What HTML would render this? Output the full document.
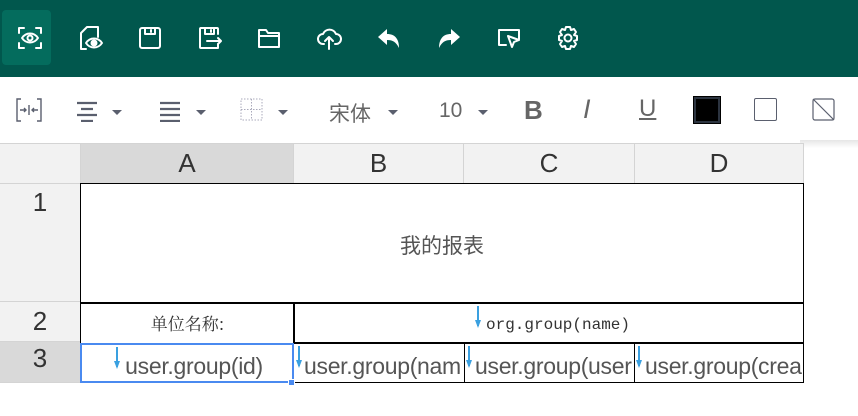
<!DOCTYPE html>
<html><head><meta charset="utf-8"><style>
*{margin:0;padding:0;box-sizing:border-box}
body{width:858px;height:416px;overflow:hidden;background:#fff;font-family:"Liberation Sans","Noto Sans CJK SC",sans-serif;position:relative}
.hdr{position:absolute;left:0;top:0;width:858px;height:77px;background:#01574d}
.act{position:absolute;left:2px;top:10px;width:49px;height:55px;background:#046c5d;border-radius:4px}
.ic{position:absolute;top:24px;width:28px;height:28px}
.ic svg{width:28px;height:28px;fill:none;stroke:#fff;stroke-width:2;stroke-linecap:round;stroke-linejoin:round}
.caret{position:absolute;width:0;height:0;border-left:5px solid transparent;border-right:5px solid transparent;border-top:5px solid #5a5f6e}
.t{position:absolute;font-size:21px;color:#666}
.c{position:absolute;display:flex;align-items:center;justify-content:center;font-size:26px;color:#333}
.ch{background:#f2f2f2;border-right:1px solid #d4d4d4;border-bottom:1px solid #d4d4d4}
.cell{position:absolute;border:1px solid #000;display:flex;align-items:center;justify-content:center;color:#555;overflow:hidden;white-space:nowrap}
.arr{position:absolute;top:2px;width:2px;height:20px;background:#3aa0e0}
.arr:after{content:"";position:absolute;left:-2px;bottom:-2px;border-left:3px solid transparent;border-right:3px solid transparent;border-top:8px solid #3aa0e0}
.u{font-size:23px;letter-spacing:-0.3px;padding-top:6px}
</style></head><body>
<div class="hdr">
<div class="act"></div>
<div class="ic" style="left:16px"><svg viewBox="0 0 28 28"><path d="M3 9V4h5M20 4h5v5M25 19v5h-5M8 24H3v-5"/><path d="M6 14c4-6 12-6 16 0c-4 6-12 6-16 0z"/><circle cx="14" cy="14" r="2.5"/></svg></div>
<div class="ic" style="left:76px"><svg viewBox="0 0 28 28"><path d="M10 25H5V9l6-6h11v10"/><path d="M10 19c4-6 12-6 16 0c-4 6-12 6-16 0z"/><circle cx="18" cy="19" r="2.5" fill="#fff"/></svg></div>
<div class="ic" style="left:136px"><svg viewBox="0 0 28 28"><rect x="4" y="4" width="20" height="20" rx="2"/><path d="M9 4v6h10V4M15 6v2"/></svg></div>
<div class="ic" style="left:196px"><svg viewBox="0 0 28 28"><path d="M22 10V5a1 1 0 0 0-1-1H5a1 1 0 0 0-1 1v18a1 1 0 0 0 1 1h17v-4"/><path d="M9 4v6h9V4M15 6v2M11 17h14M22 14l3 3-3 3"/></svg></div>
<div class="ic" style="left:255px"><svg viewBox="0 0 28 28"><path d="M4 6h7l2 3h11v14H4z M4 12h20"/></svg></div>
<div class="ic" style="left:315px"><svg viewBox="0 0 28 28"><path d="M9 20H8a5 5 0 0 1 0-10 7 7 0 0 1 13 0 5 5 0 0 1 0 10h-1"/><path d="M14 25V13M10 17l4-4 4 4"/></svg></div>
<div class="ic" style="left:375px"><svg viewBox="0 0 28 28" style="fill:#fff;stroke:none"><path d="M12 5L3 13l9 8v-5c6 0 9 2 12 8c0-9-4-14-12-14z"/></svg></div>
<div class="ic" style="left:435px"><svg viewBox="0 0 28 28" style="fill:#fff;stroke:none"><path d="M16 5l9 8-9 8v-5c-6 0-9 2-12 8c0-9 4-14 12-14z"/></svg></div>
<div class="ic" style="left:495px"><svg viewBox="0 0 28 28"><path d="M11 21H4V6h20v9"/><path d="M13 12l11 4-5 2-2 5z"/></svg></div>
<div class="ic" style="left:554px"><svg viewBox="0 0 28 28"><circle cx="14" cy="14" r="3.5"/><path d="M12 3h4l1 3 3-1 2 3-2 3 3 1v4l-3 1 2 3-2 3-3-1-1 3h-4l-1-3-3 1-2-3 2-3-3-1v-4l3-1-2-3 2-3 3 1z"/></svg></div>
</div>
<div style="position:absolute;left:800px;top:140px;width:58px;height:8px;background:linear-gradient(#e6e6e6,#fff)"></div>
<svg style="position:absolute;left:15px;top:97px" width="28" height="26" viewBox="0 0 28 26" fill="none" stroke="#5a5f6e" stroke-width="1.4"><path d="M6 2H2v22h4M22 2h4v22h-4M5 13h6M9 11l2 2-2 2M23 13h-6M19 11l-2 2 2 2M14 8v10"/></svg>
<svg style="position:absolute;left:75px;top:100px" width="24" height="22" viewBox="0 0 24 22" stroke="#5a5f6e" stroke-width="2.2"><path d="M2 3h20M6 9h12M2 15h20M6 21h12"/></svg>
<div class="caret" style="left:112px;top:110px"></div>
<svg style="position:absolute;left:158px;top:100px" width="24" height="22" viewBox="0 0 24 22" stroke="#5a5f6e" stroke-width="2.2"><path d="M2 3h20M2 9h20M2 15h20M2 21h20"/></svg>
<div class="caret" style="left:196px;top:110px"></div>
<svg style="position:absolute;left:240px;top:98px" width="24" height="24" viewBox="0 0 24 24" stroke="#aab" stroke-width="1" stroke-dasharray="1.5 1.5" fill="none"><rect x="1" y="1" width="21" height="21"/><path d="M11.5 1v21M1 11.5h21"/></svg>
<div class="caret" style="left:278px;top:110px"></div>
<div class="t" style="left:329px;top:98px">宋体</div>
<div class="caret" style="left:388px;top:110px"></div>
<div class="t" style="left:439px;top:99px">10</div>
<div class="caret" style="left:478px;top:110px"></div>
<div class="t" style="left:524px;top:95px;font-weight:bold;font-size:26px;color:#666">B</div>
<div class="t" style="left:583px;top:94px;font-style:italic;font-size:27px">I</div>
<div class="t" style="left:639px;top:95px;font-size:24px;text-decoration:underline">U</div>
<div style="position:absolute;left:694px;top:97px;width:26px;height:26px;background:#000;border:2px solid #2c3440;outline:1px solid #000"></div>
<div style="position:absolute;left:754px;top:98px;width:23px;height:23px;border:1.5px solid #5a5f6e;border-radius:2px"></div>
<svg style="position:absolute;left:812px;top:98px" width="23" height="23" viewBox="0 0 23 23" fill="none" stroke="#5a5f6e" stroke-width="1.2"><rect x="1" y="1" width="21" height="21" rx="2"/><path d="M1 1l21 21"/></svg>

<div class="c ch" style="left:0;top:143px;width:81px;height:41px;border-top:1px solid #d4d4d4"></div>
<div class="c ch" style="left:81px;top:143px;width:213px;height:41px;background:#d9d9d9;border-top:1px solid #d4d4d4">A</div>
<div class="c ch" style="left:294px;top:143px;width:170px;height:41px;border-top:1px solid #d4d4d4">B</div>
<div class="c ch" style="left:464px;top:143px;width:171px;height:41px;border-top:1px solid #d4d4d4">C</div>
<div class="c ch" style="left:635px;top:143px;width:169px;height:41px;border-top:1px solid #d4d4d4">D</div>
<div class="c ch" style="left:0;top:184px;width:81px;height:118px;align-items:flex-start;padding-top:3px">1</div>
<div class="c ch" style="left:0;top:302px;width:81px;height:40px">2</div>
<div class="c ch" style="left:0;top:342px;width:81px;height:41px;background:#d9d9d9;align-items:flex-start;padding-top:1px">3</div>

<div class="cell" style="left:80px;top:183px;width:724px;height:121px;font-size:21px;padding-top:2px">我的报表</div>
<div class="cell" style="left:80px;top:302px;width:215px;height:42px;border-top:2px solid #000;font-family:'Noto Serif CJK SC',serif;font-size:17px;color:#333;padding-bottom:2px">单位名称:</div>
<div class="cell" style="left:293px;top:302px;width:511px;height:42px;border:2px solid #000;border-right-width:1px;font-family:'Liberation Mono',monospace;font-size:16px;color:#333;padding-top:4px;padding-left:18px"><span class="arr" style="left:182px"></span>org.group(name)</div>
<div class="cell u" style="left:293px;top:343px;width:172px;height:40px;justify-content:flex-start;padding-left:10px"><span class="arr" style="left:4px"></span>user.group(nam</div>
<div class="cell u" style="left:464px;top:343px;width:171px;height:40px;justify-content:flex-start;padding-left:10px"><span class="arr" style="left:3px"></span>user.group(user</div>
<div class="cell u" style="left:634px;top:343px;width:170px;height:40px;justify-content:flex-start;padding-left:10px"><span class="arr" style="left:3px"></span>user.group(crea</div>
<div class="cell u" style="left:80px;top:343px;width:214px;height:40px;border:2px solid #4a8af0;padding-left:14px"><span class="arr" style="left:34px"></span>user.group(id)</div>
<div style="position:absolute;left:288px;top:379px;width:7px;height:7px;background:#4a8af0;border:1px solid #fff"></div>
</body></html>
